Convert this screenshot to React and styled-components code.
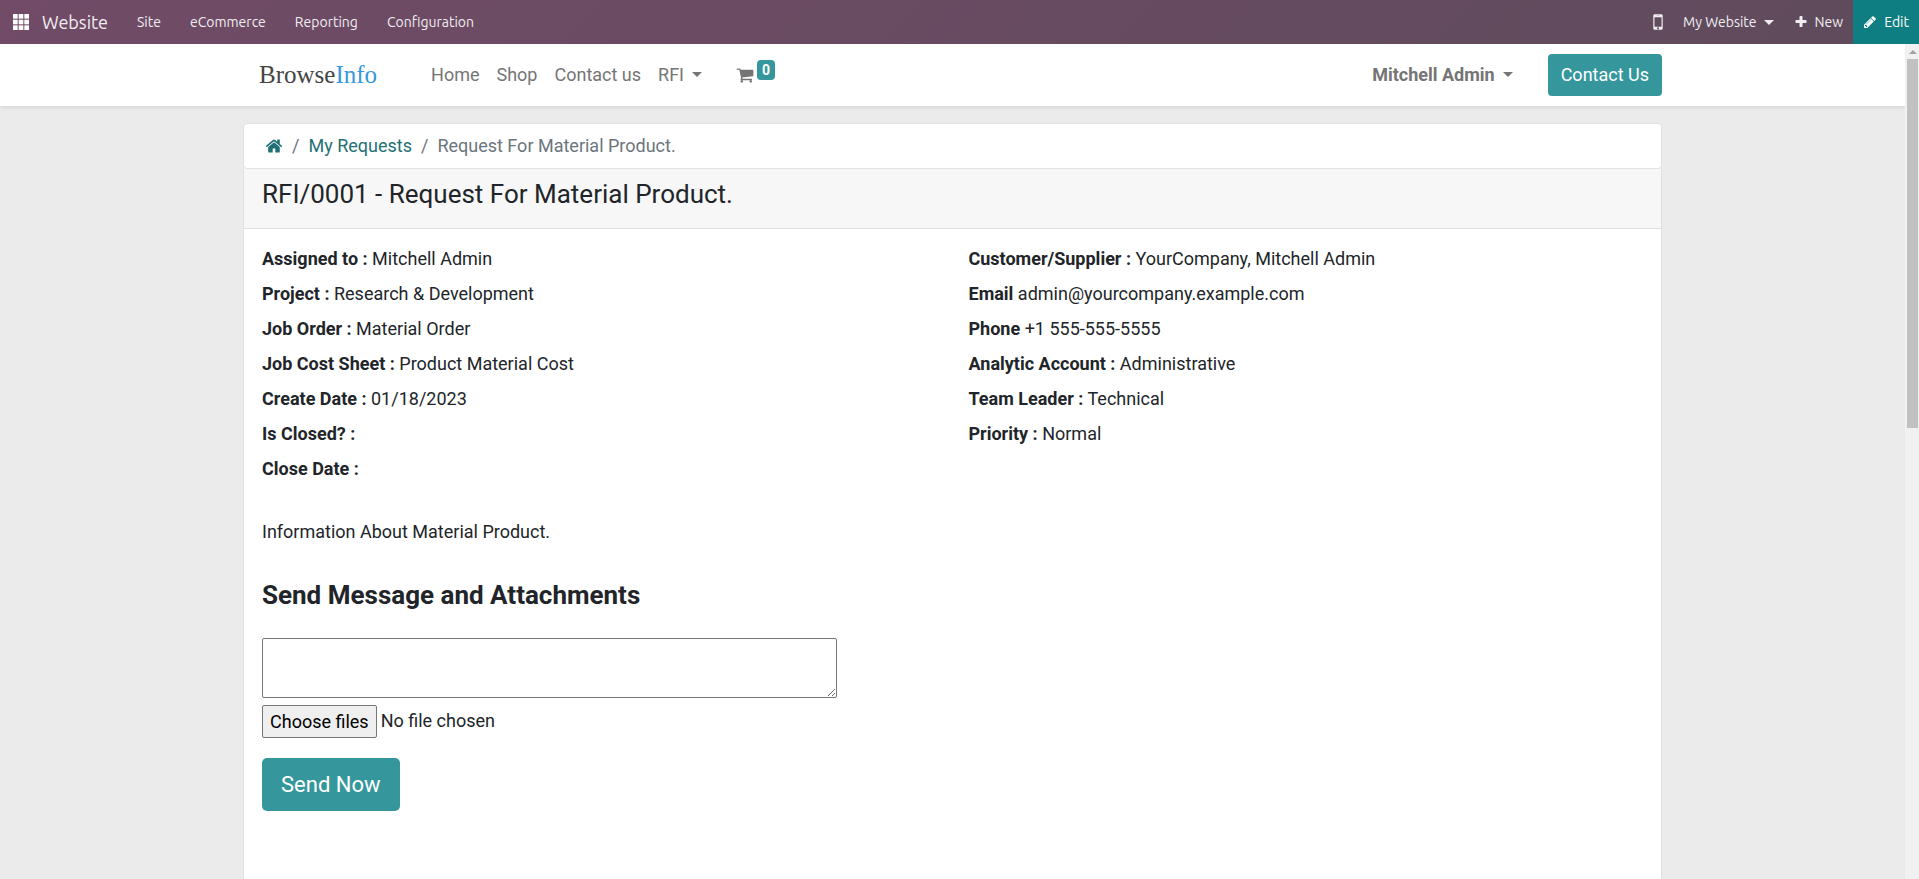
import React from "react";
import styled, { createGlobalStyle } from "styled-components";

const GlobalStyle = createGlobalStyle`
  *, *::before, *::after { box-sizing: border-box; }
  html, body { margin: 0; height: 100%; }
  body {
    overflow: hidden;
    color: #212529;
    background: #ebebeb;
    font: 18px/27px Roboto, "Liberation Sans", sans-serif;
  }
  a { color: inherit; text-decoration: none; }
  button, textarea { font: inherit; }
`;

const Shell = styled.div`
  display: flex;
  flex-direction: column;
  height: 100vh;
`;

const TopBar = styled.header`
  display: flex;
  flex: none;
  align-items: stretch;
  height: 44px;
  padding-left: 13px;
  color: #f0eef0;
  background: linear-gradient(135deg, #714b67, #5f4b5c);
  font: 14px/20px Ubuntu, "Noto Sans", sans-serif;
`;

const AppsButton = styled.button`
  display: flex;
  align-items: center;
  padding: 0;
  border: 0;
  color: #fff;
  background: none;
`;

const AppName = styled.a`
  display: flex;
  align-items: center;
  margin: 0 29px 0 13px;
  font-size: 18px;
`;

const AppMenu = styled.nav`
  display: flex;
  align-items: center;
  gap: 29px;
`;

const SystemTray = styled.div`
  display: flex;
  margin-left: auto;
`;

const TrayButton = styled.button`
  display: flex;
  align-items: center;
  gap: 7px;
  padding: 0 ${(p) => (p.$compact ? 4 : 10)}px;
  border: 0;
  color: ${(p) => (p.$active ? "#fff" : "inherit")};
  background: ${(p) => (p.$active ? "#0f7e83" : "none")};
`;

const Caret = styled.span`
  width: 0;
  margin-left: ${(p) => p.$space || 0}px;
  border: 5px solid transparent;
  border-top-color: currentColor;
  border-bottom: 0;
`;

const Icon = styled.svg`
  flex: none;
  width: ${(p) => p.$size}px;
  height: ${(p) => p.$size}px;
  fill: currentColor;
`;

const Body = styled.div`
  display: flex;
  flex: 1;
  min-height: 0;
`;

const Page = styled.div`
  display: flex;
  flex: 1;
  flex-direction: column;
  min-width: 0;
  overflow: hidden;
`;

const SiteHeader = styled.header`
  position: relative;
  flex: none;
  padding: 10px 0;
  background: #fff;
  box-shadow: 0 2px 4px rgba(0, 0, 0, 0.08);
`;

const Container = styled.div`
  width: 100%;
  max-width: 1419px;
  margin: 0 auto;
`;

const HeaderRow = styled(Container)`
  display: flex;
  align-items: center;
  color: #757575;
`;

const Logo = styled.a`
  margin: 0 54px 0 16px;
  color: #444;
  font: 25px/30px "Liberation Serif", serif;
`;

const LogoAccent = styled.span`
  color: #3498db;
`;

const SiteNav = styled.nav`
  display: flex;
  align-items: center;
  gap: 17px;
`;

const NavLink = styled.a`
  display: flex;
  align-items: center;
  padding-bottom: 2px;
`;

const CartLink = styled.a`
  display: flex;
  align-items: center;
  margin-left: 34px;
`;

const CartBadge = styled.span`
  align-self: flex-start;
  margin: 0 0 11px 3px;
  padding: 0 5px;
  border-radius: 4px;
  color: #fff;
  background: #35979c;
  font-size: 14px;
  font-weight: 700;
  line-height: 20px;
`;

const UserLink = styled(NavLink)`
  margin: 0 35px 0 auto;
  font-weight: 700;
`;

const ContactButton = styled.a`
  padding: 7px 13px 8px;
  border-radius: 4px;
  color: #fff;
  background: #35979c;
`;

const Content = styled(Container)`
  display: flex;
  flex: 1;
  flex-direction: column;
  min-height: 0;
  padding-top: 17px;
`;

const Breadcrumb = styled.ol`
  display: flex;
  flex: none;
  align-items: center;
  margin: 0;
  padding: 8px 21px 9px;
  border: 1px solid #dee2e6;
  border-radius: 4px;
  background: #fff;
  list-style: none;
`;

const Crumb = styled.li`
  display: flex;
  align-items: center;
  color: ${(p) => (p.$current ? "#6c757d" : "#1f7074")};

  &:not(:first-child)::before {
    content: "/";
    padding: 0 9px;
    color: #6c757d;
  }
`;

const CrumbLink = styled.a`
  display: flex;
`;

const Card = styled.main`
  flex: 1;
  border: 1px solid #dfdfdf;
  border-width: 0 1px;
  background: #fff;
`;

const CardHeader = styled.div`
  padding: 9px 18px 18px;
  border-bottom: 1px solid #dfdfdf;
  background: #f7f7f7;
`;

const Title = styled.h1`
  margin: 0;
  font-size: 26px;
  font-weight: 400;
  line-height: 32px;
`;

const CardBody = styled.div`
  padding: 16px 18px;
`;

const Details = styled.div`
  display: grid;
  grid-template-columns: 1fr 1fr;
  column-gap: 32px;
`;

const DetailList = styled.div`
  display: flex;
  flex-direction: column;
  gap: 8px;
`;

const Description = styled.p`
  margin: 36px 0 34px;
`;

const SectionTitle = styled.h2`
  margin: 0 0 27px;
  font-size: 26px;
  font-weight: 700;
  line-height: 32px;
`;

const MessageBox = styled.textarea`
  display: block;
  width: 100%;
  max-width: 575px;
  height: 60px;
  padding: 2px;
  border: 1px solid #767676;
  border-radius: 2px;
  background: #fff;
  resize: both;
`;

const FilePicker = styled.label`
  position: relative;
  display: flex;
  gap: 4px;
  width: fit-content;
  margin: 7px 0 20px;
`;

const FileInput = styled.input`
  position: absolute;
  inset: 0;
  width: 100%;
  opacity: 0;
`;

const FileButton = styled.span`
  padding: 2px 7px;
  border: 1px solid #767676;
  border-radius: 2px;
  color: #000;
  background: #efefef;
`;

const FileStatus = styled.span`
  padding-top: 2px;
`;

const SendButton = styled.button`
  padding: 9px 19px;
  border: 0;
  border-radius: 5px;
  color: #fff;
  background: #35979c;
  font-size: 22px;
  line-height: 35px;
`;

const ScrollTrack = styled.div`
  display: flex;
  flex: none;
  flex-direction: column;
  align-items: center;
  width: 14px;
  padding: 6px 1px 0 2px;
  background: #f1f1f1;
`;

const ScrollArrow = styled.span`
  border: 4px solid transparent;
  border-top: 0;
  border-bottom-color: #a3a3a3;
`;

const ScrollThumb = styled.span`
  width: 100%;
  height: 44.5%;
  margin-top: 5px;
  background: #c1c1c1;
`;

const iconPaths = {
  mobile:
    "M976 1408q0-33-23.5-56.5t-56.5-23.5-56.5 23.5-23.5 56.5 23.5 56.5 56.5 23.5 56.5-23.5 23.5-56.5zm208-160v-704q0-13-9.5-22.5t-22.5-9.5h-512q-13 0-22.5 9.5t-9.5 22.5v704q0 13 9.5 22.5t22.5 9.5h512q13 0 22.5-9.5t9.5-22.5zm-192-848q0-16-16-16h-160q-16 0-16 16t16 16h160q16 0 16-16zm288-16v1024q0 52-38 90t-90 38h-512q-52 0-90-38t-38-90v-1024q0-52 38-90t90-38h512q52 0 90 38t38 90z",
  plus:
    "M1600 736v192q0 40-28 68t-68 28h-416v416q0 40-28 68t-68 28h-192q-40 0-68-28t-28-68v-416h-416q-40 0-68-28t-28-68v-192q0-40 28-68t68-28h416v-416q0-40 28-68t68-28h192q40 0 68 28t28 68v416h416q40 0 68 28t28 68z",
  pencil:
    "M491 1536l91-91-235-235-91 91v107h128v128h107zm523-928q0-22-22-22-10 0-17 7l-542 542q-7 7-7 17 0 22 22 22 10 0 17-7l542-542q7-7 7-17zm-54-192l416 416-832 832h-416v-416zm683 96q0 53-37 90l-166 166-416-416 166-165q36-38 90-38 53 0 91 38l235 234q37 39 37 91z",
  home:
    "M1472 992v480q0 26-19 45t-45 19h-384v-384h-256v384h-384q-26 0-45-19t-19-45v-480q0-1 .5-3t.5-3l575-474 575 474q1 2 1 6zm223-69l-62 74q-8 9-21 11h-3q-13 0-21-7l-692-577-692 577q-12 8-24 7-13-2-21-11l-62-74q-8-10-7-23.5t11-21.5l719-599q32-26 76-26t76 26l244 204v-195q0-14 9-23t23-9h192q14 0 23 9t9 23v408l219 182q10 8 11 21.5t-7 23.5z",
  cart:
    "M704 1536q0 52-38 90t-90 38-90-38-38-90 38-90 90-38 90 38 38 90zm896 0q0 52-38 90t-90 38-90-38-38-90 38-90 90-38 90 38 38 90zm128-1088v512q0 24-16.5 42.5t-40.5 21.5l-1044 122q13 60 13 70 0 16-24 64h920q26 0 45 19t19 45-19 45-45 19h-1024q-26 0-45-19t-19-45q0-11 8-31.5t16-36 21.5-40 15.5-29.5l-177-823h-204q-26 0-45-19t-19-45 19-45 45-19h256q16 0 28.5 6.5t19.5 15.5 13 24.5 8 26 5.5 29.5 4.5 26h1201q26 0 45 19t19 45z",
};

const Glyph = ({ name, size }) => (
  <Icon viewBox="0 0 1792 1792" $size={size} aria-hidden="true">
    <path d={iconPaths[name]} />
  </Icon>
);

const leftDetails = [
  ["Assigned to :", "Mitchell Admin"],
  ["Project :", "Research & Development"],
  ["Job Order :", "Material Order"],
  ["Job Cost Sheet :", "Product Material Cost"],
  ["Create Date :", "01/18/2023"],
  ["Is Closed? :", ""],
  ["Close Date :", ""],
];

const rightDetails = [
  ["Customer/Supplier :", "YourCompany, Mitchell Admin"],
  ["Email", "admin@yourcompany.example.com"],
  ["Phone", "+1 555-555-5555"],
  ["Analytic Account :", "Administrative"],
  ["Team Leader :", "Technical"],
  ["Priority :", "Normal"],
];

const DetailColumn = ({ items }) => (
  <DetailList>
    {items.map(([label, value]) => (
      <div key={label}>
        <strong>{label}</strong> {value}
      </div>
    ))}
  </DetailList>
);

export default function App() {
  return (
    <Shell>
      <GlobalStyle />
      <TopBar>
        <AppsButton aria-label="Apps">
          <Icon viewBox="0 0 48 48" $size={16} aria-hidden="true">
            {[0, 17, 34].map((y) =>
              [0, 17, 34].map((x) => (
                <rect key={`${x}-${y}`} x={x} y={y} width="14" height="14" />
              ))
            )}
          </Icon>
        </AppsButton>
        <AppName href="#">Website</AppName>
        <AppMenu>
          <a href="#">Site</a>
          <a href="#">eCommerce</a>
          <a href="#">Reporting</a>
          <a href="#">Configuration</a>
        </AppMenu>
        <SystemTray>
          <TrayButton $compact aria-label="Mobile preview">
            <Glyph name="mobile" size={22} />
          </TrayButton>
          <TrayButton>
            My Website
            <Caret />
          </TrayButton>
          <TrayButton>
            <Glyph name="plus" size={14} />
            New
          </TrayButton>
          <TrayButton $active>
            <Glyph name="pencil" size={14} />
            Edit
          </TrayButton>
        </SystemTray>
      </TopBar>
      <Body>
        <Page>
          <SiteHeader>
            <HeaderRow>
              <Logo href="#">
                Browse<LogoAccent>Info</LogoAccent>
              </Logo>
              <SiteNav>
                <NavLink href="#">Home</NavLink>
                <NavLink href="#">Shop</NavLink>
                <NavLink href="#">Contact us</NavLink>
                <NavLink href="#">
                  RFI
                  <Caret $space={8} />
                </NavLink>
              </SiteNav>
              <CartLink href="#" aria-label="Cart">
                <Glyph name="cart" size={18} />
                <CartBadge>0</CartBadge>
              </CartLink>
              <UserLink href="#">
                Mitchell Admin
                <Caret $space={8} />
              </UserLink>
              <ContactButton href="#">Contact Us</ContactButton>
            </HeaderRow>
          </SiteHeader>
          <Content>
            <Breadcrumb>
              <Crumb>
                <CrumbLink href="#" aria-label="Home">
                  <Glyph name="home" size={18} />
                </CrumbLink>
              </Crumb>
              <Crumb>
                <CrumbLink href="#">My Requests</CrumbLink>
              </Crumb>
              <Crumb $current>Request For Material Product.</Crumb>
            </Breadcrumb>
            <Card>
              <CardHeader>
                <Title>RFI/0001 - Request For Material Product.</Title>
              </CardHeader>
              <CardBody>
                <Details>
                  <DetailColumn items={leftDetails} />
                  <DetailColumn items={rightDetails} />
                </Details>
                <Description>Information About Material Product.</Description>
                <form onSubmit={(e) => e.preventDefault()}>
                  <SectionTitle>Send Message and Attachments</SectionTitle>
                  <MessageBox aria-label="Message" />
                  <FilePicker>
                    <FileInput type="file" multiple />
                    <FileButton>Choose files</FileButton>
                    <FileStatus>No file chosen</FileStatus>
                  </FilePicker>
                  <SendButton type="submit">Send Now</SendButton>
                </form>
              </CardBody>
            </Card>
          </Content>
        </Page>
        <ScrollTrack aria-hidden="true">
          <ScrollArrow />
          <ScrollThumb />
        </ScrollTrack>
      </Body>
    </Shell>
  );
}
